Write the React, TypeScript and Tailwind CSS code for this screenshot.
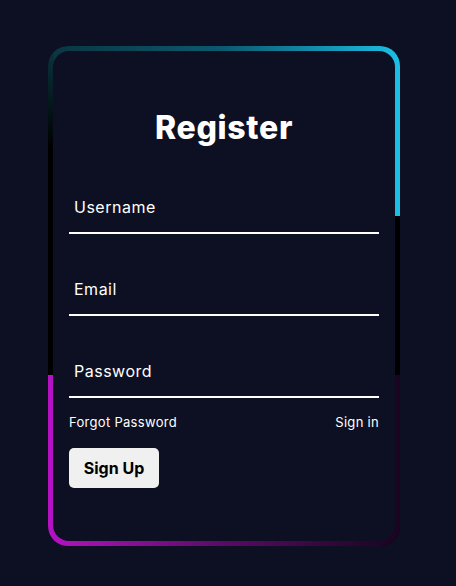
export default function App() {
  return (
    <div
      className="min-h-[586px] w-full bg-[#0c1022] pl-[48px] pt-[46px]"
      style={{ fontFamily: 'Inter, "Noto Sans", sans-serif' }}
    >
      {/* glowing frame */}
      <div className="relative flex h-[500px] w-[352px] overflow-hidden rounded-[20px] bg-black p-[5px]">
        <div className="absolute left-0 top-0 h-[170px] w-full bg-gradient-to-r from-[#0a3540] via-[#0b5a70] to-[#1cbfe6]" />
        <div className="absolute left-0 top-0 h-[170px] w-[6px] bg-gradient-to-b from-transparent to-black to-60%" />
        <div className="absolute bottom-0 left-0 h-[171px] w-full bg-gradient-to-r from-[#b512c4] via-[#5a0a66] to-[#1a0420]" />

        <form className="relative z-10 flex w-full flex-col rounded-[16px] bg-[#0d1022] px-[16px] pt-[53px] text-white">
          <h2 className="text-center text-[32px] font-extrabold leading-[48px] tracking-[0.7px]">Register</h2>

          <div className="mt-[43px] border-b-2 border-white pb-[13px] pl-[5px] text-[16px] leading-[24px] tracking-[0.5px]">
            Username
          </div>
          <div className="mt-[43px] border-b-2 border-white pb-[13px] pl-[5px] text-[16px] leading-[24px] tracking-[0.5px]">
            Email
          </div>
          <div className="mt-[43px] border-b-2 border-white pb-[13px] pl-[5px] text-[16px] leading-[24px] tracking-[0.5px]">
            Password
          </div>

          <div className="mt-[14px] flex justify-between text-[13px] leading-[20px] tracking-[0.3px]">
            <a href="#">Forgot Password</a>
            <a href="#">Sign in</a>
          </div>

          <button
            type="button"
            className="mt-[16px] h-[40px] w-[90px] rounded-[5px] bg-[#f0f0f0] text-[16px] font-bold text-black"
          >
            Sign Up
          </button>
        </form>
      </div>
    </div>
  )
}
